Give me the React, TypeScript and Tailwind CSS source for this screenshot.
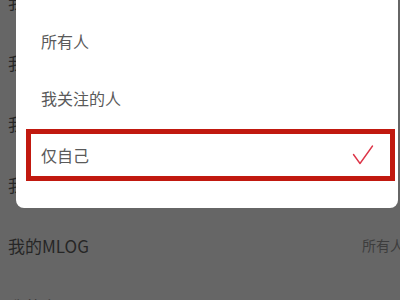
import { useState } from "react";

const backgroundRows = [
  { label: "我的收藏", value: "" },
  { label: "我的歌单", value: "" },
  { label: "我的关注", value: "" },
  { label: "我的粉丝", value: "" },
  { label: "我的MLOG", value: "所有人" },
  { label: "我的主页", value: "" },
];

const options = ["所有人", "我关注的人", "仅自己"];

function CheckMark() {
  return (
    <svg width="22" height="21" viewBox="0 0 22 21" fill="none">
      <path d="M1.5 9.5 L8 18.5 L20.5 1" stroke="#dd3548" strokeWidth="1.4" strokeLinecap="round" strokeLinejoin="round" />
    </svg>
  );
}

export default function App() {
  const [selected, setSelected] = useState("仅自己");

  return (
    <div
      className="relative h-[300px] w-[400px] overflow-hidden bg-[#666666]"
      style={{ fontFamily: '"Noto Sans CJK SC", "Noto Sans", sans-serif' }}
    >
      <div className="-mt-[29px] flex flex-col">
        {backgroundRows.map((row) => (
          <div key={row.label} className="flex h-[61px] items-center justify-between pl-2">
            <span className="text-[17px] text-[#262626]">{row.label}</span>
            <span className="-mr-[4px] text-[14px] text-[#3d3d3d]">{row.value}</span>
          </div>
        ))}
      </div>

      <div className="absolute left-4 top-0 flex h-[208px] w-[382px] flex-col rounded-b-lg bg-white pt-3">
        {options.map((option) =>
          option === selected ? (
            <button
              key={option}
              type="button"
              onClick={() => setSelected(option)}
              className="my-[3px] ml-[10px] mr-[3px] flex h-[52px] items-center justify-between border-[5px] border-[#c1190f] pl-[10px] pr-[16px] text-left"
            >
              <span className="text-[16px] text-[#5a5a5a]">{option}</span>
              <CheckMark />
            </button>
          ) : (
            <button
              key={option}
              type="button"
              onClick={() => setSelected(option)}
              className="flex h-[57px] items-center pl-[25px] text-left"
            >
              <span className="text-[16px] text-[#5a5a5a]">{option}</span>
            </button>
          )
        )}
      </div>
    </div>
  );
}
